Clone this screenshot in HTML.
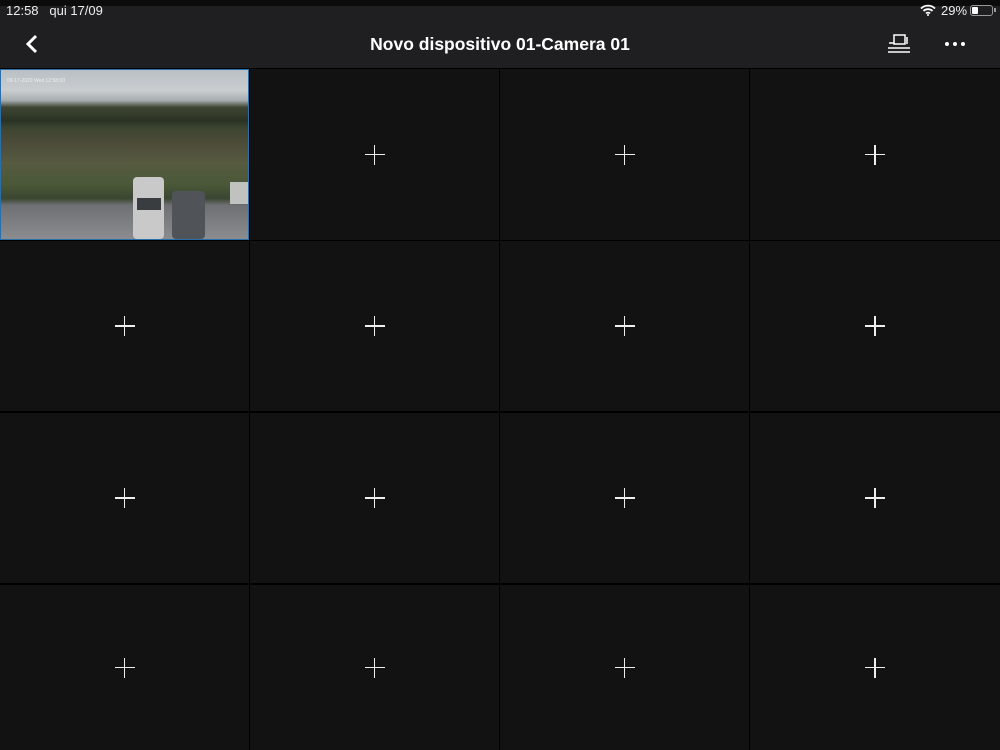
<!DOCTYPE html>
<html><head><meta charset="utf-8"><style>
*{margin:0;padding:0;box-sizing:border-box}
body{width:1000px;height:750px;background:#000;font-family:"Liberation Sans",sans-serif;position:relative;overflow:hidden;color:#fff}
.top{position:absolute;left:0;top:0;width:1000px;height:6px;background:#0b0b0b}
.hdr{position:absolute;left:0;top:6px;width:1000px;height:62px;background:#1f1f21}
.st{position:absolute;top:3px;font-size:13px;color:#eee}
.title{position:absolute;top:34px;width:1000px;text-align:center;font-size:17.5px;font-weight:bold}
.cell{position:absolute;background:#121212}
.plus{position:absolute;left:50%;top:50%;width:20px;height:20px;margin:-10px 0 0 -10px}
.plus:before,.plus:after{content:"";position:absolute;background:#eee}
.plus:before{left:9px;top:0;width:1.6px;height:20px}
.plus:after{top:9px;left:0;height:1.6px;width:20px}
.cam{position:absolute;left:0;top:69px;width:249px;height:171px;border:1.5px solid #2b6fa8;overflow:hidden;
background:linear-gradient(#b9bfc4 0%,#c9cdd0 12%,#a7adb0 18%,#3f4634 22%,#2a3224 30%,#3b4430 34%,#4b4a38 42%,#565a40 55%,#4a5838 68%,#3a4630 76%,#6e7073 80%,#8a8c8f 100%)}
</style></head><body>
<div class="top"></div>
<div class="hdr"></div>
<div class="st" style="left:6px">12:58&nbsp;&nbsp;&nbsp;qui 17/09</div>
<div class="st" style="left:941px">29%</div>
<svg style="position:absolute;left:920px;top:4px" width="16" height="12" viewBox="0 0 16 12"><path d="M1 4.5a10 10 0 0 1 14 0M3.5 7a6.5 6.5 0 0 1 9 0M6 9.4a3 3 0 0 1 4 0" stroke="#fff" stroke-width="1.8" fill="none"/><circle cx="8" cy="11" r="1" fill="#fff"/></svg>
<div style="position:absolute;left:970px;top:5px;width:23px;height:11px;border:1px solid #999;border-radius:3px"><div style="margin:1px;width:6px;height:7px;background:#fff;border-radius:1px"></div></div>
<div style="position:absolute;left:994px;top:8px;width:2px;height:4px;background:#999"></div>
<svg style="position:absolute;left:24px;top:34px" width="16" height="20" viewBox="0 0 16 20"><path d="M12 2L4 10l8 8" stroke="#fff" stroke-width="3" fill="none"/></svg>
<div class="title">Novo dispositivo 01-Camera 01</div>
<svg style="position:absolute;left:887px;top:34px" width="24" height="20" viewBox="0 0 24 20"><rect x="7" y="1" width="11" height="9" stroke="#fff" stroke-width="1.5" fill="none"/><path d="M2 9h5M20 3v7M1 14h22M1 18h22" stroke="#fff" stroke-width="1.5"/></svg>
<div style="position:absolute;left:945px;top:42px;width:20px;height:4px"><span style="position:absolute;left:0;width:4px;height:4px;border-radius:2px;background:#fff"></span><span style="position:absolute;left:8px;width:4px;height:4px;border-radius:2px;background:#fff"></span><span style="position:absolute;left:16px;width:4px;height:4px;border-radius:2px;background:#fff"></span></div>

<div class="cell" style="left:250px;top:69px;width:249px;height:171px"><div class="plus"></div></div>
<div class="cell" style="left:500px;top:69px;width:249px;height:171px"><div class="plus"></div></div>
<div class="cell" style="left:750px;top:69px;width:250px;height:171px"><div class="plus"></div></div>

<div class="cell" style="left:0;top:241px;width:249px;height:170px"><div class="plus"></div></div>
<div class="cell" style="left:250px;top:241px;width:249px;height:170px"><div class="plus"></div></div>
<div class="cell" style="left:500px;top:241px;width:249px;height:170px"><div class="plus"></div></div>
<div class="cell" style="left:750px;top:241px;width:250px;height:170px"><div class="plus"></div></div>

<div class="cell" style="left:0;top:413px;width:249px;height:170px"><div class="plus"></div></div>
<div class="cell" style="left:250px;top:413px;width:249px;height:170px"><div class="plus"></div></div>
<div class="cell" style="left:500px;top:413px;width:249px;height:170px"><div class="plus"></div></div>
<div class="cell" style="left:750px;top:413px;width:250px;height:170px"><div class="plus"></div></div>

<div class="cell" style="left:0;top:585px;width:249px;height:165px"><div class="plus"></div></div>
<div class="cell" style="left:250px;top:585px;width:249px;height:165px"><div class="plus"></div></div>
<div class="cell" style="left:500px;top:585px;width:249px;height:165px"><div class="plus"></div></div>
<div class="cell" style="left:750px;top:585px;width:250px;height:165px"><div class="plus"></div></div>

<div class="cam">
<div style="position:absolute;left:132px;top:107px;width:31px;height:62px;background:#c8c9c8;border-radius:4px"></div>
<div style="position:absolute;left:136px;top:128px;width:24px;height:12px;background:#3a3d40"></div>
<div style="position:absolute;left:171px;top:121px;width:33px;height:48px;background:#505458;border-radius:4px"></div>
<div style="position:absolute;left:229px;top:112px;width:20px;height:22px;background:#c0c2c0"></div>
<div style="position:absolute;left:6px;top:8px;font-size:5px;color:#eee">09-17-2020 Wed 12:58:00</div>
</div>
</body></html>
